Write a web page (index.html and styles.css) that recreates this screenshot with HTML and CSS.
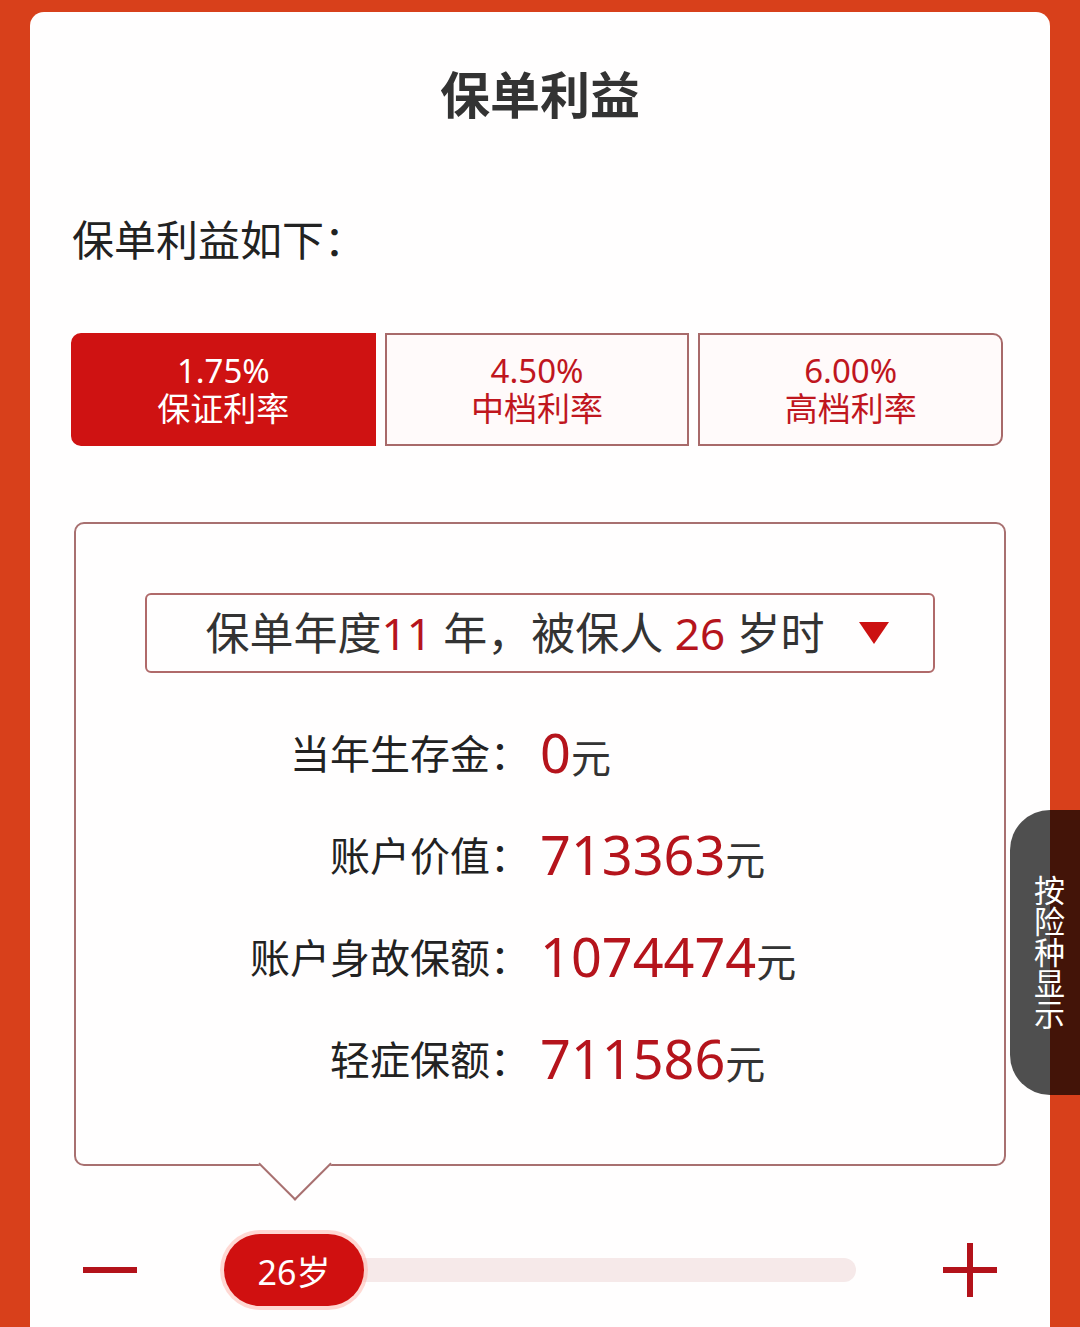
FILE: index.html
```html
<!DOCTYPE html>
<html lang="zh-CN">
<head>
<meta charset="utf-8">
<title>保单利益</title>
<link rel="stylesheet" href="styles.css">
</head>
<body>
<div class="card">
  <h1 class="title">保单利益</h1>
  <div class="subtitle">保单利益如下：</div>
  <div class="tabs">
    <div class="tab active"><span>1.75%</span><span>保证利率</span></div>
    <div class="tab"><span>4.50%</span><span>中档利率</span></div>
    <div class="tab last"><span>6.00%</span><span>高档利率</span></div>
  </div>
  <div class="panel">
    <div class="select">
      <span class="select-text">保单年度<em>11</em> 年，被保人 <em>26</em> 岁时</span>
      <span class="caret"></span>
    </div>
    <div class="rows">
      <div class="label">当年生存金：</div><div class="value"><em>0</em>元</div>
      <div class="label">账户价值：</div><div class="value"><em>713363</em>元</div>
      <div class="label">账户身故保额：</div><div class="value"><em>1074474</em>元</div>
      <div class="label">轻症保额：</div><div class="value"><em>711586</em>元</div>
    </div>
  </div>
  <div class="slider">
    <span class="minus"></span>
    <div class="track-area">
      <div class="track"></div>
      <div class="thumb">26岁</div>
    </div>
    <span class="plus"></span>
  </div>
</div>
<div class="side-tab">按险种显示</div>
</body>
</html>
```
FILE: styles.css
```css
html, body {
  margin: 0;
  padding: 0;
}
body {
  background: #d8401b;
  height: 1327px;
  overflow: hidden;
  position: relative;
  font-family: "Noto Sans", "Noto Sans CJK SC", sans-serif;
  color: #333;
}
.card {
  margin: 12px 30px 0;
  height: 1315px;
  background: #fffefe;
  border-radius: 14px 14px 0 0;
  padding-top: 48px;
  box-sizing: border-box;
}
.title {
  margin: 0;
  font-size: 50px;
  line-height: 70px;
  font-weight: 700;
  text-align: center;
  color: #333;
}
.subtitle {
  margin: 80px 0 0 42px;
  font-size: 42px;
  line-height: 60px;
  color: #222;
}
.tabs {
  display: flex;
  gap: 9px;
  margin: 63px 47px 0 41px;
  height: 113px;
}
.tab {
  flex: 1;
  display: flex;
  flex-direction: column;
  align-items: center;
  justify-content: center;
  gap: 0;
  box-sizing: border-box;
  border: 2px solid #a86a6a;
  background: #fffafa;
  color: #c0161e;
  font-size: 33px;
  line-height: 38px;
}
.tab span {
  display: block;
  height: 38px;
}
.tab.active {
  background: #cf1212;
  border-color: #cf1212;
  color: #fff;
  border-radius: 10px 0 0 10px;
}
.tab.last {
  border-radius: 0 10px 10px 0;
}
.panel {
  position: relative;
  margin: 76px 44px 0 44px;
  height: 644px;
  box-sizing: border-box;
  border: 2px solid #a87070;
  border-radius: 10px;
  padding: 69px 69px 0;
}
.panel::after {
  content: "";
  position: absolute;
  left: 193px;
  bottom: -26px;
  width: 50px;
  height: 50px;
  background: #fffefe;
  border-right: 2px solid #a87070;
  border-bottom: 2px solid #a87070;
  transform: rotate(45deg);
}
.select {
  height: 80px;
  box-sizing: border-box;
  border: 2px solid #b06a6a;
  border-radius: 6px;
  display: flex;
  align-items: center;
  justify-content: center;
  gap: 34px;
  padding-left: 14px;
}
.select-text {
  font-size: 44px;
  line-height: 60px;
  color: #333;
  white-space: pre;
}
.select-text em, .value em {
  font-style: normal;
  color: #b5141c;
}
.caret {
  width: 0;
  height: 0;
  border-left: 15px solid transparent;
  border-right: 15px solid transparent;
  border-top: 22px solid #cc1111;
}
.rows {
  margin: 28px -69px 0;
  display: grid;
  grid-template-columns: 454px 1fr;
  grid-auto-rows: 102px;
  align-items: center;
}
.label {
  text-align: right;
  font-size: 40px;
  color: #222;
}
.value {
  padding-left: 10px;
  font-size: 40px;
  color: #333;
}
.value em {
  font-size: 54px;
}
.slider {
  display: flex;
  align-items: center;
  margin: 68px 0 0 53px;
  height: 72px;
}
.minus {
  width: 54px;
  height: 6px;
  background: #b3121a;
  margin-right: 87px;
}
.track-area {
  position: relative;
  width: 632px;
  height: 72px;
  display: flex;
  align-items: center;
}
.track {
  width: 100%;
  height: 24px;
  border-radius: 12px;
  background: #f6e9e9;
}
.thumb {
  position: absolute;
  left: 0;
  top: 0;
  width: 140px;
  height: 72px;
  border-radius: 36px;
  background: #d01010;
  box-shadow: 0 0 0 4px rgba(255, 170, 160, 0.45);
  color: #fff;
  font-size: 34px;
  display: flex;
  align-items: center;
  justify-content: center;
}
.plus {
  position: relative;
  width: 54px;
  height: 54px;
  margin-left: 87px;
}
.plus::before, .plus::after {
  content: "";
  position: absolute;
  background: #b3121a;
}
.plus::before {
  left: 0;
  top: 24px;
  width: 54px;
  height: 6px;
}
.plus::after {
  left: 24px;
  top: 0;
  width: 6px;
  height: 54px;
}
.side-tab {
  position: absolute;
  right: 0;
  top: 810px;
  width: 70px;
  height: 285px;
  border-radius: 40px 0 0 40px;
  background: rgba(0, 0, 0, 0.69);
  color: #fff;
  font-size: 31px;
  line-height: 70px;
  writing-mode: vertical-rl;
  display: flex;
  align-items: center;
  justify-content: center;
  box-sizing: border-box;
  padding-left: 6px;
}
```
